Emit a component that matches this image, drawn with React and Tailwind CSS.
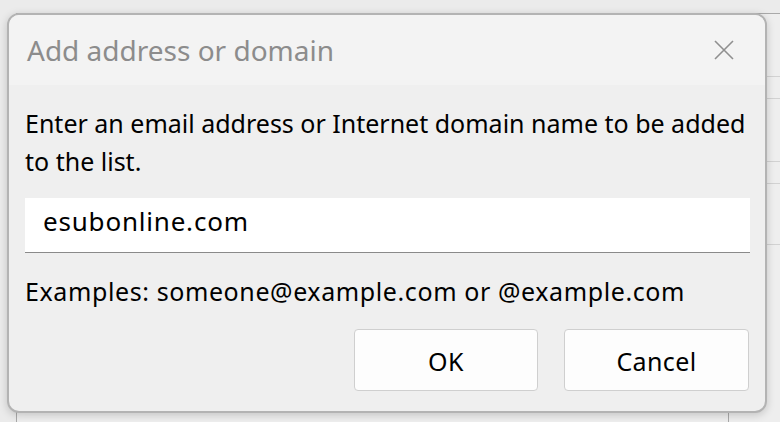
import { useState } from 'react';

const font = { fontFamily: '"Segoe UI", "Noto Sans", "Open Sans", sans-serif' };

function CloseIcon() {
  return (
    <svg width="20" height="20" viewBox="0 0 20 20" className="block">
      <path d="M1 1 L19 19 M19 1 L1 19" stroke="#8f8f8f" strokeWidth="1.6" fill="none" />
    </svg>
  );
}

export default function App() {
  const [value, setValue] = useState('esubonline.com');

  return (
    <div className="relative w-[780px] h-[422px] overflow-hidden bg-[#ebebeb]" style={font}>
      {/* window behind the dialog */}
      <div className="absolute left-[16px] top-[13px] right-0 bottom-0 border-t border-l border-[#a9a9a9] bg-[#eeeeee]">
        <div className="absolute left-[711px] top-0 bottom-0 w-px bg-[#a9a9a9]" />
        <div className="absolute left-[712px] right-0 top-[62px] h-px bg-[#d2d2d2]" />
        <div className="absolute left-[712px] right-0 top-[84px] h-px bg-[#d2d2d2]" />
        <div className="absolute left-[712px] right-0 top-[147px] h-px bg-[#d2d2d2]" />
        <div className="absolute left-[712px] right-0 top-[169px] h-px bg-[#d2d2d2]" />
        <div className="absolute left-[712px] right-0 top-[230px] h-px bg-[#d2d2d2]" />
      </div>

      {/* dialog */}
      <div className="absolute left-[7px] top-[13px] w-[760px] h-[400px] rounded-[12px] border-2 border-[#b3b3b3] bg-[#efefef] overflow-hidden flex flex-col shadow-[0_2px_8px_rgba(0,0,0,0.18)]">
        <div className="h-[70px] shrink-0 bg-[#f3f3f3] flex items-center justify-between pl-[18px] pr-[31px]">
          <span className="text-[28px] leading-none text-[#8c8c8c] -mt-[1px]">Add address or domain</span>
          <CloseIcon />
        </div>

        <div className="flex flex-col pl-[16px] pr-[15px] pt-[19px]">
          <p className="text-[25px] leading-[38px] text-black whitespace-nowrap">
            Enter an email address or Internet domain name to be added<br />to the list.
          </p>

          <input
            className="mt-[18px] h-[55px] bg-white border-b border-[#8a8a8a] pl-[18px] pr-[19px] pb-[8px] text-[26px] tracking-[0.8px] text-black outline-none"
            style={font}
            value={value}
            onChange={(e) => setValue(e.target.value)}
          />

          <p className="mt-[23px] text-[25px] leading-[30px] tracking-[0.6px] text-black">
            Examples: someone@example.com or @example.com
          </p>

          <div className="mt-[23px] flex justify-end gap-[26px] pr-px">
            <button className="w-[184px] h-[62px] rounded-[4px] border border-[#cfcfcf] bg-[#fdfdfd] pt-[3px] text-[25px] tracking-[0.4px] text-black">OK</button>
            <button className="w-[185px] h-[62px] rounded-[4px] border border-[#cfcfcf] bg-[#fdfdfd] pt-[3px] text-[25px] tracking-[0.4px] text-black">Cancel</button>
          </div>
        </div>
      </div>
    </div>
  );
}
